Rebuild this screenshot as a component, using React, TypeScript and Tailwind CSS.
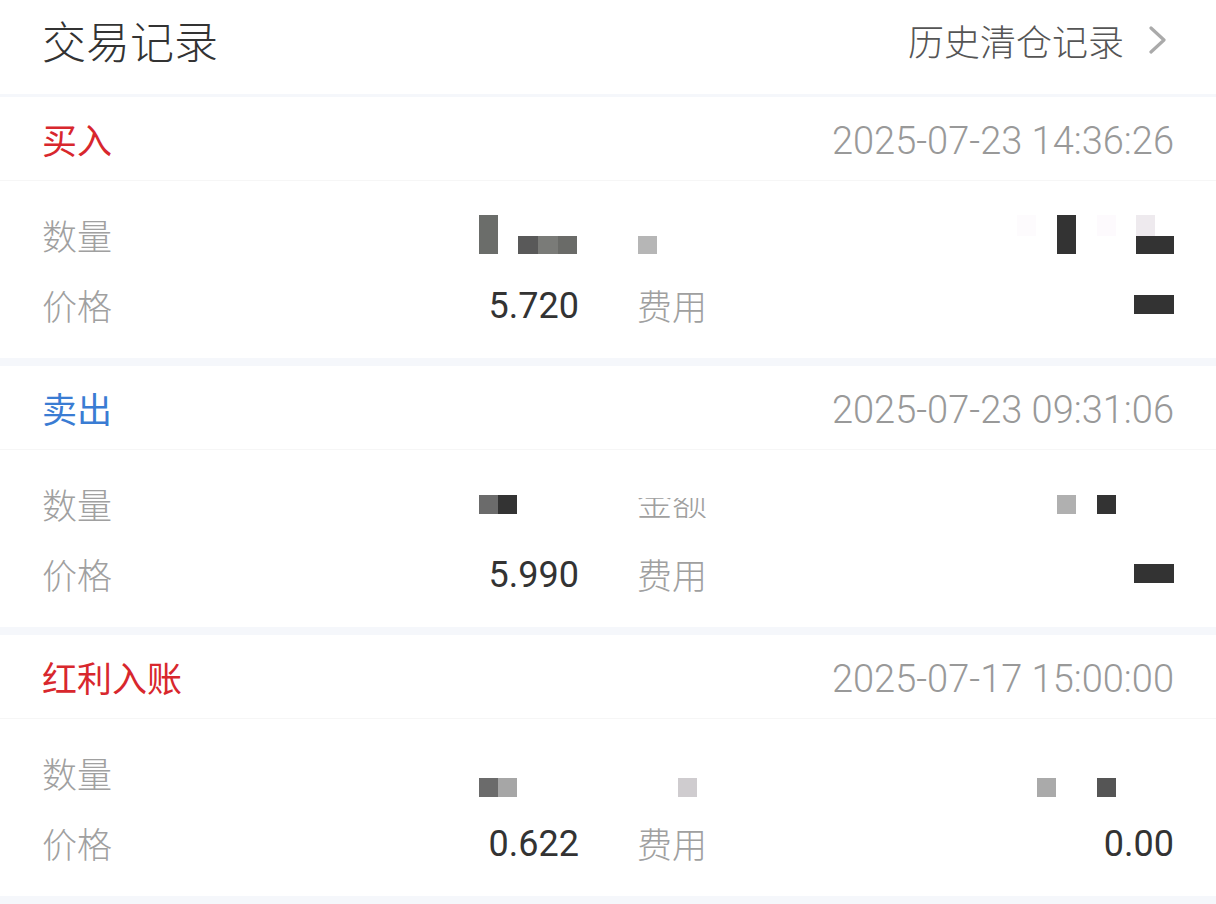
import React from 'react'

type Cell = { x: number; y: number; w: number; h: number; c: string }

const cjk = '"Noto Sans CJK SC", "Noto Sans", sans-serif'
const num = 'Roboto, "Noto Sans CJK SC", sans-serif'

// pixelated blocks that cover the hidden values
function Mosaic({ cells, w, h, clip }: { cells: Cell[]; w: number; h: number; clip?: number }) {
  return (
    <div className="relative" style={{ width: w, height: h }}>
      {clip ? (
        <div
          className="absolute left-0 bottom-[5px] overflow-hidden flex items-end"
          style={{ height: clip }}
        >
          <span className="text-[35px] font-light leading-none text-[#a0a0a0]" style={{ fontFamily: cjk }}>
            金额
          </span>
        </div>
      ) : null}
      {cells.map((b, i) => (
        <div
          key={i}
          className="absolute"
          style={{ left: b.x, top: b.y, width: b.w, height: b.h, background: b.c }}
        />
      ))}
    </div>
  )
}

type Record = {
  type: string
  color: string
  time: string
  price: string
  fee: string | null
  qtyCells: Cell[]
  amountCells: Cell[]
  amountClip?: number
  feeCells?: Cell[]
}

const records: Record[] = [
  {
    type: '买入',
    color: 'text-[#d8272d]',
    time: '2025-07-23 14:36:26',
    price: '5.720',
    fee: null,
    qtyCells: [
      { x: 0, y: 0, w: 19, h: 39, c: '#6b6d6a' },
      { x: 39, y: 21, w: 20, h: 18, c: '#595959' },
      { x: 59, y: 21, w: 20, h: 18, c: '#7a7b78' },
      { x: 79, y: 21, w: 19, h: 18, c: '#6a6b68' },
    ],
    amountCells: [
      { x: 1, y: 21, w: 19, h: 18, c: '#b6b6b6' },
      { x: 380, y: 0, w: 19, h: 21, c: '#fdfbfd' },
      { x: 420, y: 0, w: 19, h: 39, c: '#333333' },
      { x: 460, y: 0, w: 19, h: 21, c: '#fdfafd' },
      { x: 499, y: 0, w: 19, h: 21, c: '#eeeaee' },
      { x: 499, y: 21, w: 38, h: 18, c: '#333333' },
    ],
    feeCells: [{ x: 0, y: 0, w: 40, h: 19, c: '#333333' }],
  },
  {
    type: '卖出',
    color: 'text-[#3a7cd3]',
    time: '2025-07-23 09:31:06',
    price: '5.990',
    fee: null,
    qtyCells: [
      { x: 0, y: 11, w: 19, h: 19, c: '#6b6b6b' },
      { x: 19, y: 11, w: 19, h: 19, c: '#333333' },
    ],
    amountCells: [
      { x: 420, y: 11, w: 19, h: 19, c: '#b0b0b0' },
      { x: 460, y: 11, w: 19, h: 19, c: '#333333' },
    ],
    amountClip: 20,
    feeCells: [{ x: 0, y: 0, w: 40, h: 19, c: '#333333' }],
  },
  {
    type: '红利入账',
    color: 'text-[#d8272d]',
    time: '2025-07-17 15:00:00',
    price: '0.622',
    fee: '0.00',
    qtyCells: [
      { x: 0, y: 25, w: 19, h: 19, c: '#6b6b6b' },
      { x: 19, y: 25, w: 19, h: 19, c: '#a6a6a6' },
    ],
    amountCells: [
      { x: 41, y: 25, w: 19, h: 19, c: '#cfcccf' },
      { x: 400, y: 25, w: 19, h: 19, c: '#aaaaaa' },
      { x: 460, y: 25, w: 19, h: 19, c: '#555555' },
    ],
  },
]

function Label({ children }: { children: React.ReactNode }) {
  return (
    <span className="text-[35px] font-light leading-none text-[#a0a0a0]" style={{ fontFamily: cjk }}>
      {children}
    </span>
  )
}

function RecordCard({ r }: { r: Record }) {
  return (
    <div className="bg-white h-[261px] flex flex-col">
      <div className="h-[84px] px-[42px] flex items-center justify-between border-b border-[#f6f6f6]">
        <span className={`text-[35px] leading-none ${r.color}`} style={{ fontFamily: cjk }}>
          {r.type}
        </span>
        <span className="text-[38px] font-light leading-none text-[#999] pt-[4px]" style={{ fontFamily: num }}>
          {r.time}
        </span>
      </div>
      <div className="px-[42px] pt-[18px] grid grid-cols-2 gap-x-[58px]">
        <div className="h-[70px] flex items-center justify-between">
          <Label>数量</Label>
          <Mosaic cells={r.qtyCells} w={100} h={39} />
        </div>
        <div className="h-[70px] flex items-center">
          <Mosaic cells={r.amountCells} w={537} h={39} clip={r.amountClip} />
        </div>
        <div className="h-[70px] flex items-center justify-between">
          <Label>价格</Label>
          <span className="text-[36px] leading-none text-[#333] pt-[4px]" style={{ fontFamily: num }}>
            {r.price}
          </span>
        </div>
        <div className="h-[70px] flex items-center justify-between">
          <Label>费用</Label>
          {r.fee ? (
            <span className="text-[36px] leading-none text-[#333] pt-[4px]" style={{ fontFamily: num }}>
              {r.fee}
            </span>
          ) : (
            <Mosaic cells={r.feeCells ?? []} w={40} h={19} />
          )}
        </div>
      </div>
    </div>
  )
}

export default function App() {
  return (
    <div className="w-[1216px] h-[904px] overflow-hidden bg-[#f5f7fb] flex flex-col">
      <div className="h-[94px] bg-white px-[42px] pb-[14px] flex items-center justify-between">
        <span className="text-[44px] font-light leading-none text-[#333]" style={{ fontFamily: cjk }}>
          交易记录
        </span>
        <div className="flex items-center gap-[24px]">
          <span className="text-[36px] font-light leading-none text-[#555]" style={{ fontFamily: cjk }}>
            历史清仓记录
          </span>
          <svg width="20" height="28" viewBox="0 0 20 28" className="mr-[6px]">
            <polyline
              points="3,2 16,14 3,26"
              fill="none"
              stroke="#aaaaaa"
              strokeWidth="3.2"
              strokeLinecap="round"
              strokeLinejoin="round"
            />
          </svg>
        </div>
      </div>
      <div className="mt-[3px] flex flex-col gap-[8px]">
        {records.map((r) => (
          <RecordCard key={r.time} r={r} />
        ))}
      </div>
    </div>
  )
}
